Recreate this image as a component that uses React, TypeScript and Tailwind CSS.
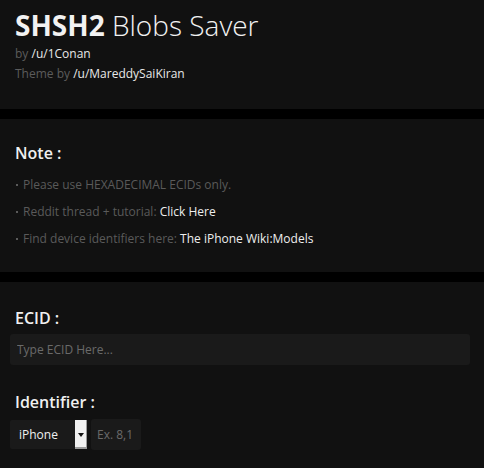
const notes = [
  { text: 'Please use HEXADECIMAL ECIDs only.' },
  { text: 'Reddit thread + tutorial: ', link: 'Click Here' },
  { text: 'Find device identifiers here: ', link: 'The iPhone Wiki:Models' },
];

export default function App() {
  return (
    <div className="flex min-h-[468px] flex-col gap-[10px] bg-black font-['Open_Sans',sans-serif] text-white">
      <header className="bg-[#111111] px-[15px] pb-[25px] pt-[8px]">
        <h1 className="text-[28px] leading-[34px] text-[#f2f2f2]">
          <span className="font-bold">SHSH2</span> <span className="font-light">Blobs Saver</span>
        </h1>
        <div className="mt-[2px] text-[12px] leading-[20px] text-[#5c5c5c]">
          by <a className="text-[#e8e8e8]">/u/1Conan</a>
        </div>
        <div className="text-[12px] leading-[20px] text-[#5c5c5c]">
          Theme by <a className="text-[#e8e8e8]">/u/MareddySaiKiran</a>
        </div>
      </header>

      <section className="bg-[#111111] px-[15px] pb-[20px] pt-[22px]">
        <h2 className="text-[16px] font-semibold leading-[24px] text-[#f0f0f0]">Note :</h2>
        <ul className="mt-[6px]">
          {notes.map((n) => (
            <li key={n.text} className="flex items-center text-[12px] leading-[27px] text-[#5a5a5a]">
              <span className="ml-[1px] mr-[5px] h-[2px] w-[2px] bg-[#5a5a5a]" />
              <span>
                {n.text}
                {n.link && <a className="text-[#eeeeee]">{n.link}</a>}
              </span>
            </li>
          ))}
        </ul>
      </section>

      <section className="flex-1 bg-[#111111] px-[10px] pt-[25px]">
        <label className="block px-[5px] text-[16px] font-semibold leading-[22px] text-[#f0f0f0]">ECID :</label>
        <input
          className="mt-[5px] block h-[31px] w-[460px] rounded-[3px] bg-[#1a1a1a] px-[7px] text-[12px] text-white outline-none placeholder:text-[#6a6a6a]"
          placeholder="Type ECID Here..."
        />

        <label className="mt-[25px] block px-[5px] text-[16px] font-semibold leading-[24px] text-[#f0f0f0]">
          Identifier :
        </label>
        <div className="mt-[6px] flex items-start gap-[4px]">
          <div className="flex h-[29px] w-[77px] items-stretch rounded-l-[2px] bg-[#1a1a1a]">
            <span className="flex-1 pl-[9px] text-[12px] leading-[29px] text-[#f0f0f0]">iPhone</span>
            <span className="flex w-[12px] items-center justify-center bg-[#f0f0f0] shadow-[inset_-1px_-2px_0_#9a9a9a]">
              <svg width="6" height="4" viewBox="0 0 6 4">
                <path d="M0 0h6L3 4z" fill="#111" />
              </svg>
            </span>
          </div>
          <input
            className="-mt-[1px] h-[31px] w-[50px] rounded-[3px] bg-[#1a1a1a] px-[6px] text-[12px] text-white outline-none placeholder:text-[#6a6a6a]"
            placeholder="Ex. 8,1"
          />
        </div>
      </section>
    </div>
  );
}
